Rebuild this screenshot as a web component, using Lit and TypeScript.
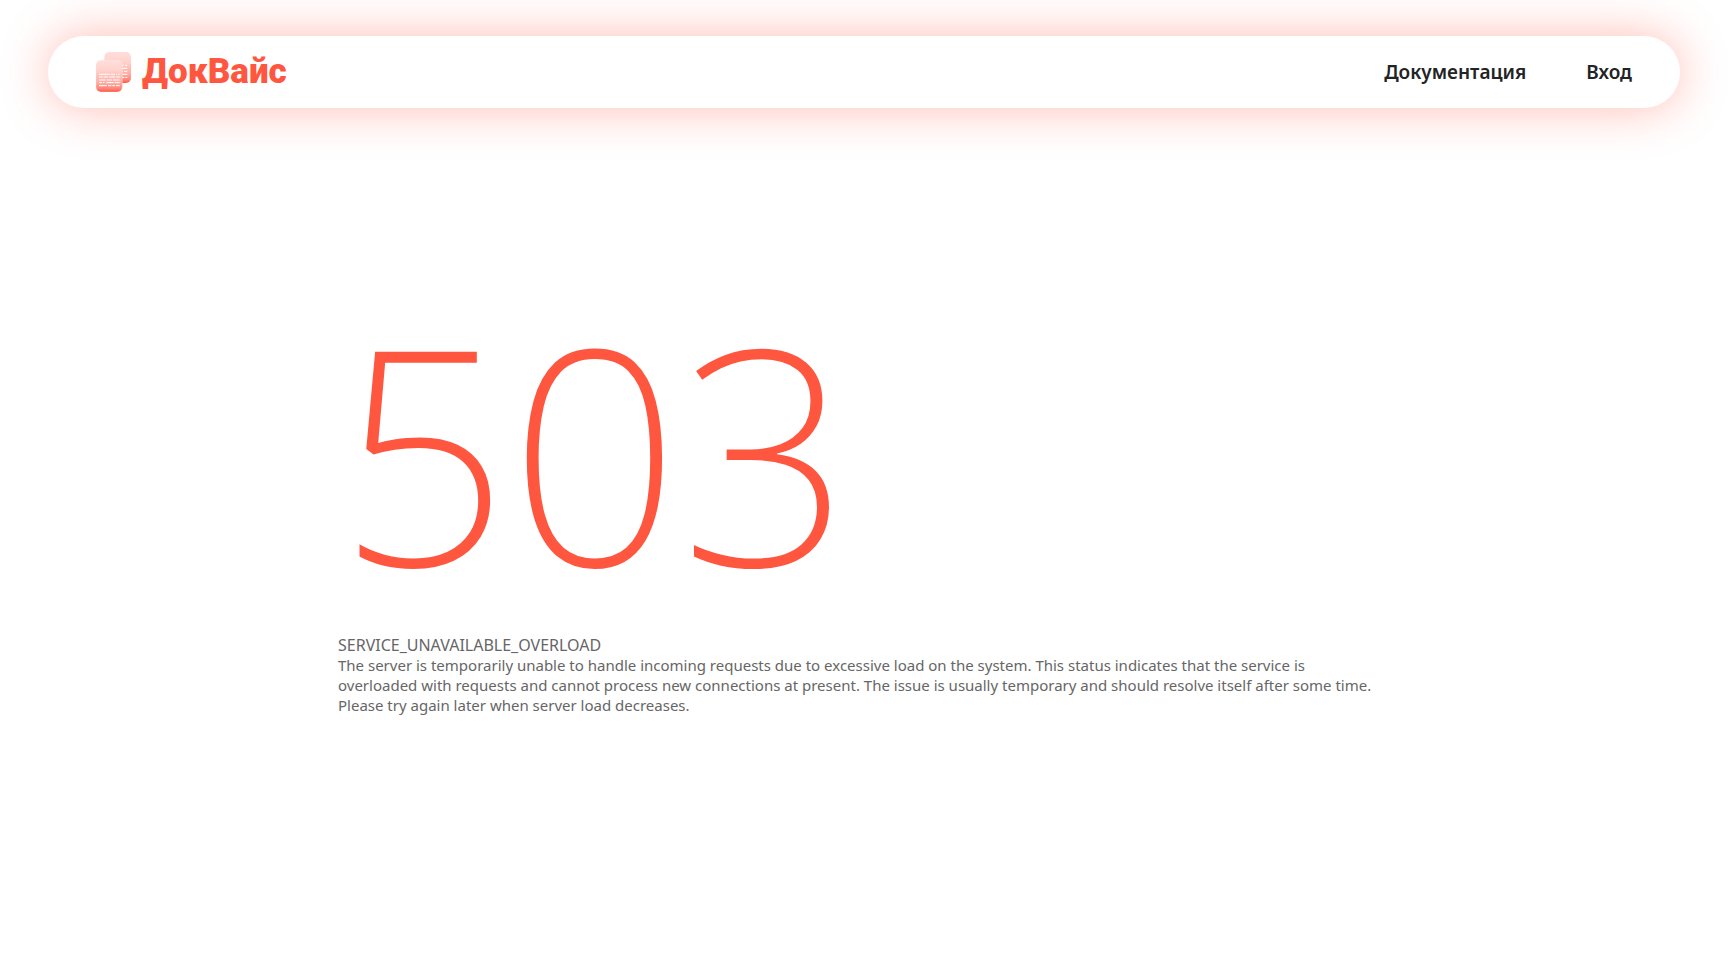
import { LitElement, html, css } from "lit";
import { customElement, property } from "lit/decorators.js";

@customElement("brand-mark")
class BrandMark extends LitElement {
  static styles = css`
    :host {
      display: block;
    }
    .mark {
      display: block;
      width: 35px;
      height: 40px;
    }
  `;

  render() {
    return html`
      <svg class="mark" viewBox="0 0 105 120" aria-hidden="true">
        <defs>
          <linearGradient id="sheet" x1="0" y1="0" x2="0" y2="1">
            <stop offset="0" stop-color="#ffdedb" />
            <stop offset="0.3" stop-color="#ffd3ce" />
            <stop offset="0.7" stop-color="#ffaca3" />
            <stop offset="0.9" stop-color="#ff8477" />
            <stop offset="1" stop-color="#ff5540" />
          </linearGradient>
        </defs>
        <rect x="25" y="0" width="80" height="93" rx="15" fill="url(#sheet)" />
        <g stroke="#fff" stroke-width="3">
          <path d="M76 40h7M87 40h7M76 49h18M76 58h5M84 58h10M76 67h18M76 76h9M88 76h6" />
        </g>
        <rect x="0" y="25" width="79" height="95" rx="15" fill="url(#sheet)" stroke="#ffe6e3" stroke-width="1" />
        <g stroke="#fff" stroke-width="3">
          <path d="M9 67h32M44 67h13M60 67h3M67 67h4" />
          <path d="M9 75h11M23 75h13M39 75h19M61 75h10" />
          <path d="M9 84h20M32 84h16M51 84h20" />
          <path d="M9 92h9M21 92h4M31 92h22M56 92h15" />
          <path d="M9 101h24M36 101h10M49 101h8M60 101h11" />
        </g>
      </svg>
    `;
  }
}

@customElement("site-header")
class SiteHeader extends LitElement {
  static styles = css`
    :host {
      display: block;
    }
    .bar {
      display: flex;
      align-items: center;
      justify-content: space-between;
      box-sizing: border-box;
      min-height: 72px;
      padding: 0 48px;
      border-radius: 36px;
      background: #fff;
      box-shadow: 0 0 48px rgba(255, 86, 64, 0.4);
    }
    .brand {
      display: flex;
      align-items: center;
      gap: 11px;
      color: #ff5640;
      font: 900 35px/42px Roboto, sans-serif;
      text-decoration: none;
    }
    .nav {
      display: flex;
      gap: 60px;
    }
    .link {
      color: #222325;
      font: 600 19px/24px "Noto Sans", sans-serif;
      text-decoration: none;
    }
  `;

  render() {
    return html`
      <header class="bar">
        <a class="brand" href="#"><brand-mark></brand-mark><span>ДокВайс</span></a>
        <nav class="nav">
          <a class="link" href="#docs">Документация</a>
          <a class="link" href="#login">Вход</a>
        </nav>
      </header>
    `;
  }
}

@customElement("error-message")
class ErrorMessage extends LitElement {
  @property() status = "";
  @property() code = "";
  @property() description = "";

  static styles = css`
    :host {
      display: block;
    }
    .status {
      margin: 0;
      padding-top: 20px;
      color: #ff5640;
      font-weight: 170;
      font-size: 300px;
      line-height: 370px;
    }
    .code,
    .description {
      max-width: 1044px;
      margin: 0;
      color: #666;
      line-height: 20px;
    }
    .code {
      font-size: 16px;
    }
    .description {
      font-size: 15px;
    }
  `;

  render() {
    return html`
      <h1 class="status">${this.status}</h1>
      <p class="code">${this.code}</p>
      <p class="description">${this.description}</p>
    `;
  }
}

@customElement("app-root")
class AppRoot extends LitElement {
  static styles = css`
    :host {
      display: flex;
      flex-direction: column;
      box-sizing: border-box;
      min-height: 100vh;
      padding: 36px 48px 110px;
      background: #fff;
      font-family: "Noto Sans", sans-serif;
      overflow: hidden;
    }
    .content {
      display: flex;
      flex: 1;
      flex-direction: column;
      justify-content: center;
      width: 100%;
      max-width: 1052px;
      margin: 0 auto;
    }
  `;

  render() {
    return html`
      <site-header></site-header>
      <main class="content">
        <error-message
          status="503"
          code="SERVICE_UNAVAILABLE_OVERLOAD"
          description="The server is temporarily unable to handle incoming requests due to excessive load on the system. This status indicates that the service is overloaded with requests and cannot process new connections at present. The issue is usually temporary and should resolve itself after some time. Please try again later when server load decreases."
        ></error-message>
      </main>
    `;
  }
}
